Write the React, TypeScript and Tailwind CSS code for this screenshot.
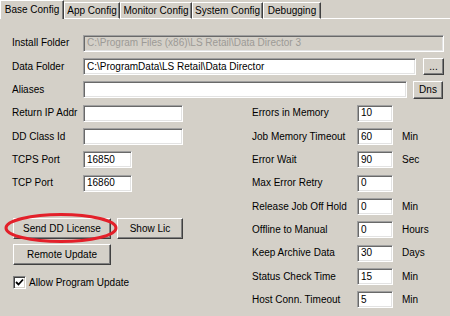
import React from "react";

const inputBase =
  "h-[17px] flex items-center pl-[2px] overflow-hidden whitespace-nowrap border border-t-[#a0a0a0] border-l-[#a0a0a0] border-b-white border-r-white shadow-[inset_1px_1px_0_#696969,inset_-1px_-1px_0_#e3e3e3]";

function Input({ w, value = "", disabled = false }: { w: string; value?: string; disabled?: boolean }) {
  return (
    <div className={`${inputBase} ${w} ${disabled ? "bg-[#d4d0c8] text-[#9c9a96]" : "bg-white text-black"}`}>
      <span className="pl-[1px]">{value}</span>
    </div>
  );
}

const btnBase =
  "flex items-center justify-center bg-[#d4d0c8] border border-t-white border-l-white border-b-[#404040] border-r-[#404040] shadow-[inset_-1px_-1px_0_#808080]";

function Btn({ w, h, label }: { w: string; h: string; label: string }) {
  return <div className={`${btnBase} ${w} ${h}`}>{label}</div>;
}

function Tab({ label, w, selected }: { label: string; w: string; selected?: boolean }) {
  if (selected) {
    return (
      <div className={`${w} h-[19px] flex items-start justify-center pt-[3px] border-t border-l border-t-white border-l-white border-r border-r-[#404040] shadow-[inset_-1px_0_0_#808080]`}>
        {label}
      </div>
    );
  }
  return (
    <div className={`${w} mt-[2px] h-[17px] flex items-start justify-center pt-[2px] border-t border-l border-b border-t-white border-l-white border-b-white border-r border-r-[#404040] shadow-[inset_-1px_0_0_#808080]`}>
      {label}
    </div>
  );
}

const rightRows: { label: string; value: string; unit: string; h: string }[] = [
  { label: "Errors in Memory", value: "10", unit: "", h: "h-[24px]" },
  { label: "Job Memory Timeout", value: "60", unit: "Min", h: "h-[23px]" },
  { label: "Error Wait", value: "90", unit: "Sec", h: "h-[23px]" },
  { label: "Max Error Retry", value: "0", unit: "", h: "h-[24px]" },
  { label: "Release Job Off Hold", value: "0", unit: "Min", h: "h-[23px]" },
  { label: "Offline to Manual", value: "0", unit: "Hours", h: "h-[23px]" },
  { label: "Keep Archive Data", value: "30", unit: "Days", h: "h-[24px]" },
  { label: "Status Check Time", value: "15", unit: "Min", h: "h-[23px]" },
  { label: "Host Conn. Timeout", value: "5", unit: "Min", h: "h-[23px]" },
];

export default function App() {
  return (
    <div className="w-[450px] h-[316px] overflow-hidden whitespace-nowrap bg-[#d4d0c8] text-black text-[10px] leading-[12px] font-['Liberation_Sans',Arial,sans-serif]">
      {/* Tab strip */}
      <div className="flex h-[19px]">
        <Tab label="Base Config" w="w-[64px]" selected />
        <Tab label="App Config" w="w-[56px]" />
        <Tab label="Monitor Config" w="w-[72px]" />
        <Tab label="System Config" w="w-[71px]" />
        <Tab label="Debugging" w="w-[58px]" />
        <div className="flex-1 border-b border-b-white" />
      </div>

      {/* Panel */}
      <div className="pt-[12px] pl-[12px] pr-[6px]">
        <div className="flex items-center h-[24px]">
          <div className="w-[71px]">Install Folder</div>
          <div className="flex-1">
            <Input w="w-full" value="C:\Program Files (x86)\LS Retail\Data Director 3" disabled />
          </div>
        </div>
        <div className="flex items-center h-[23px]">
          <div className="w-[71px]">Data Folder</div>
          <div className="flex-1">
            <Input w="w-full" value="C:\ProgramData\LS Retail\Data Director" />
          </div>
          <div className="ml-[7px]">
            <Btn w="w-[21px]" h="h-[17px]" label="..." />
          </div>
        </div>
        <div className="flex items-center h-[23px]">
          <div className="w-[71px]">Aliases</div>
          <div className="flex-1">
            <Input w="w-full" value="" />
          </div>
          <div className="ml-[6px] mr-[1px]">
            <Btn w="w-[30px]" h="h-[18px]" label="Dns" />
          </div>
        </div>

        <div className="flex">
          {/* Left column */}
          <div className="w-[240px] flex flex-col">
            <div className="flex items-center h-[24px]">
              <div className="w-[71px]">Return IP Addr</div>
              <Input w="w-[100px]" />
            </div>
            <div className="flex items-center h-[23px]">
              <div className="w-[71px]">DD Class Id</div>
              <Input w="w-[100px]" />
            </div>
            <div className="flex items-center h-[23px]">
              <div className="w-[71px]">TCPS Port</div>
              <Input w="w-[49px]" value="16850" />
            </div>
            <div className="flex items-center h-[24px]">
              <div className="w-[71px]">TCP Port</div>
              <Input w="w-[49px]" value="16860" />
            </div>

            <div className="mt-[23px] ml-[1px] flex gap-[6px]">
              <div className="relative">
                <Btn w="w-[98px]" h="h-[21px]" label="Send DD License" />
                <svg
                  className="absolute left-[-9px] top-[-6px] pointer-events-none"
                  width="116"
                  height="32"
                  viewBox="0 0 116 32"
                >
                  <ellipse cx="57" cy="16" rx="55" ry="13.5" fill="none" stroke="#e3202a" strokeWidth="3" />
                </svg>
              </div>
              <Btn w="w-[66px]" h="h-[21px]" label="Show Lic" />
            </div>
            <div className="mt-[5px] ml-[1px]">
              <Btn w="w-[98px]" h="h-[21px]" label="Remote Update" />
            </div>
            <div className="mt-[11px] ml-[1px] flex items-center gap-[3px]">
              <div className="w-[13px] h-[13px] bg-white border border-t-[#808080] border-l-[#808080] border-b-white border-r-white shadow-[inset_1px_1px_0_#404040,inset_-1px_-1px_0_#d4d0c8] flex items-center justify-center">
                <svg width="9" height="9" viewBox="0 0 9 9">
                  <polyline points="1,4 3.5,6.5 8,1.5" fill="none" stroke="#000" strokeWidth="1.8" />
                </svg>
              </div>
              <div>Allow Program Update</div>
            </div>
          </div>

          {/* Right column */}
          <div className="flex-1 flex flex-col">
            {rightRows.map((r) => (
              <div key={r.label} className={`flex items-center ${r.h}`}>
                <div className="w-[105px]">{r.label}</div>
                <Input w="w-[36px]" value={r.value} />
                <div className="ml-[9px]">{r.unit}</div>
              </div>
            ))}
          </div>
        </div>
      </div>
    </div>
  );
}
